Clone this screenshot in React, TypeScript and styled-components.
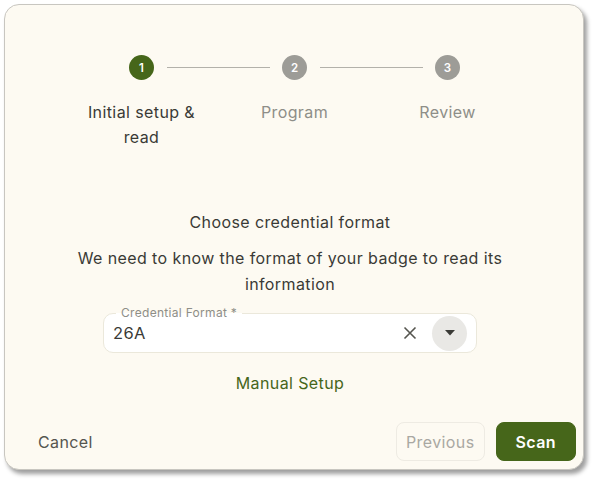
import React from 'react';
import styled, { createGlobalStyle } from 'styled-components';

const GlobalStyle = createGlobalStyle`
  html, body {
    margin: 0;
    padding: 0;
    background: #ffffff;
    font-family: 'Inter', 'Lato', sans-serif;
    letter-spacing: 0.4px;
  }
`;

const green = '#46661a';
const textDark = '#3a3a36';
const textGrey = '#8e8e88';

const Page = styled.div`
  padding: 4px;
  width: 597px;
  height: 483px;
  box-sizing: border-box;
`;

const Dialog = styled.div`
  width: 580px;
  height: 466px;
  box-sizing: border-box;
  background: #fdfaf2;
  border: 1px solid #c8c6c0;
  border-radius: 15px;
  box-shadow: 3px 4px 4px rgba(0, 0, 0, 0.38);
  display: flex;
  flex-direction: column;
  padding: 50px 7px 8px 8px;
`;

const Stepper = styled.div`
  display: grid;
  grid-template-columns: repeat(3, 153px);
  justify-content: center;
`;

const Step = styled.div`
  position: relative;
  display: flex;
  flex-direction: column;
  align-items: center;
`;

const Connector = styled.div`
  position: absolute;
  top: 12px;
  left: calc(-50% + 25px);
  right: calc(50% + 25px);
  border-top: 1px solid #b3b1aa;
`;

const Circle = styled.div<{ $active?: boolean }>`
  width: 25px;
  height: 25px;
  border-radius: 50%;
  background: ${(p) => (p.$active ? green : '#9d9c97')};
  color: #ffffff;
  font-size: 11.5px;
  font-weight: 600;
  letter-spacing: 0;
  display: flex;
  align-items: center;
  justify-content: center;
`;

const StepLabel = styled.div<{ $active?: boolean }>`
  margin-top: 20px;
  padding: 0 10px;
  text-align: center;
  font-size: 16px;
  line-height: 25px;
  color: ${(p) => (p.$active ? textDark : textGrey)};
`;

const Content = styled.div`
  display: flex;
  flex-direction: column;
  align-items: center;
  padding-right: 9px;
  margin-top: 60px;
`;

const Title = styled.div`
  font-size: 16px;
  line-height: 24px;
  color: ${textDark};
`;

const Description = styled.div`
  margin-top: 11px;
  width: 450px;
  font-size: 16px;
  line-height: 26px;
  text-align: center;
  color: ${textDark};
`;

const Field = styled.div`
  position: relative;
  margin-top: 16px;
  width: 374px;
  height: 40px;
  box-sizing: border-box;
  background: #ffffff;
  border: 1px solid #ebe8db;
  border-radius: 10px;
  display: flex;
  align-items: center;
  padding: 0 9px 0 9px;
`;

const FieldLabel = styled.span`
  position: absolute;
  top: -8px;
  left: 12px;
  padding: 0 5px;
  font-size: 12px;
  line-height: 14px;
  letter-spacing: 0.3px;
  color: ${textGrey};
  background: linear-gradient(to bottom, #fdfaf2 50%, #ffffff 50%);
`;

const FieldValue = styled.div`
  flex: 1;
  font-size: 16.5px;
  color: ${textDark};
`;

const IconButton = styled.div<{ $filled?: boolean }>`
  width: ${(p) => (p.$filled ? '35px' : '28px')};
  height: ${(p) => (p.$filled ? '35px' : '28px')};
  border-radius: 50%;
  background: ${(p) => (p.$filled ? '#e9e8e5' : 'transparent')};
  display: flex;
  align-items: center;
  justify-content: center;
  margin-left: ${(p) => (p.$filled ? '8px' : '0')};
`;

const LinkButton = styled.div`
  margin-top: 18px;
  font-size: 16px;
  line-height: 24px;
  color: ${green};
`;

const Footer = styled.div`
  margin-top: auto;
  display: flex;
  align-items: center;
  gap: 11px;
`;

const TextButton = styled.div`
  padding: 0 25px;
  font-size: 16px;
  color: #55554f;
  margin-right: auto;
`;

const Button = styled.div<{ $primary?: boolean }>`
  height: 39px;
  box-sizing: border-box;
  border-radius: 8px;
  display: flex;
  align-items: center;
  justify-content: center;
  font-size: 16px;
  padding: 0 ${(p) => (p.$primary ? '19px' : '9px')};
  background: ${(p) => (p.$primary ? green : 'transparent')};
  border: 1px solid ${(p) => (p.$primary ? green : '#eeebe3')};
  color: ${(p) => (p.$primary ? '#ffffff' : '#a9a8a2')};
  font-weight: ${(p) => (p.$primary ? 600 : 400)};
`;

const steps = ['Initial setup & read', 'Program', 'Review'];

export default function App() {
  return (
    <Page>
      <GlobalStyle />
      <Dialog>
        <Stepper>
          {steps.map((label, i) => (
            <Step key={label}>
              {i > 0 && <Connector />}
              <Circle $active={i === 0}>{i + 1}</Circle>
              <StepLabel $active={i === 0}>{label}</StepLabel>
            </Step>
          ))}
        </Stepper>

        <Content>
          <Title>Choose credential format</Title>
          <Description>
            We need to know the format of your badge to read its information
          </Description>
          <Field>
            <FieldLabel>Credential Format *</FieldLabel>
            <FieldValue>26A</FieldValue>
            <IconButton>
              <svg width="14" height="14" viewBox="0 0 14 14">
                <path d="M1.5 1.5 L12.5 12.5 M12.5 1.5 L1.5 12.5" stroke="#55554f" strokeWidth="1.6" />
              </svg>
            </IconButton>
            <IconButton $filled>
              <svg width="10" height="6" viewBox="0 0 10 6">
                <path d="M0 0 L10 0 L5 5.5 Z" fill="#3a3a36" />
              </svg>
            </IconButton>
          </Field>
          <LinkButton>Manual Setup</LinkButton>
        </Content>

        <Footer>
          <TextButton>Cancel</TextButton>
          <Button>Previous</Button>
          <Button $primary>Scan</Button>
        </Footer>
      </Dialog>
    </Page>
  );
}
